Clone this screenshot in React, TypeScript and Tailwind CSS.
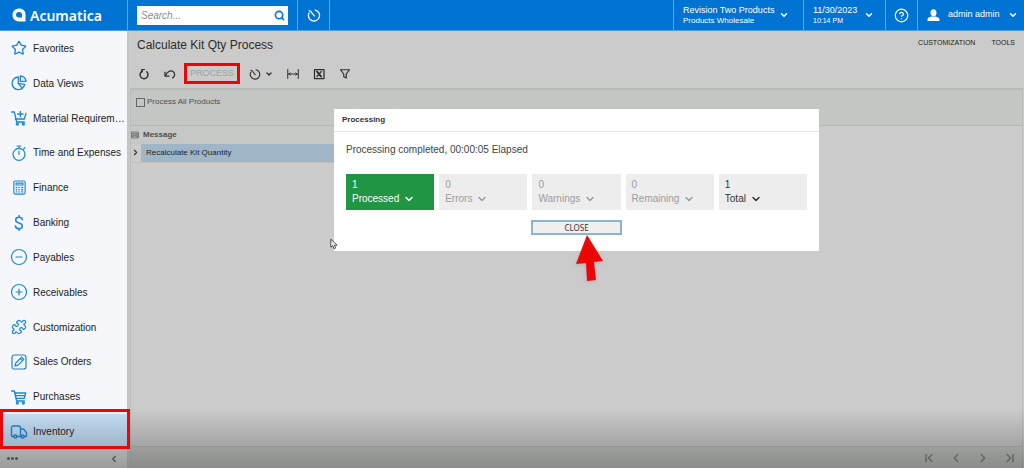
import React, { useState } from 'react';
import {
  ChevronDown,
  ChevronFirst,
  ChevronLast,
  ChevronLeft,
  ChevronRight,
  CircleMinus,
  CirclePlus,
  CircleHelp,
  Puzzle,
  Search,
  Star,
  Truck,
} from 'lucide-react';

type IconProps = { className?: string };

const stroke = {
  viewBox: '0 0 24 24',
  fill: 'none',
  stroke: 'currentColor',
  strokeLinecap: 'round' as const,
  strokeLinejoin: 'round' as const,
};

function PieIcon({ className }: IconProps) {
  return (
    <svg {...stroke} strokeWidth="2" className={className}>
      <path d="M11 3a9.500 9.500 0 1 0 9.500 11L11 12.500z" />
      <path d="M14 9.500V1.500a8.500 8.500 0 0 1 8.500 8z" />
      <path d="m11 12.500 6 7.500" />
    </svg>
  );
}

function CartIcon({ className, plus }: IconProps & { plus?: boolean }) {
  return (
    <svg {...stroke} strokeWidth="2" className={className}>
      <path d="M1 3h4l3.500 15H20" />
      {plus ? <path d="M6.500 13.500H20L22.500 5M14 2v8M10 6h8" /> : <path d="M5.500 6H22l-2 8H7.500M6.500 10H21" />}
      <circle cx="9.500" cy="21" r="1.500" />
      <circle cx="18.500" cy="21" r="1.500" />
    </svg>
  );
}

function StopwatchIcon({ className }: IconProps) {
  return (
    <svg {...stroke} strokeWidth="1.800" className={className}>
      <circle cx="12" cy="14" r="9" />
      <path d="M12 5V2M9 1.500h6M12 9v5M19 6l2-2" />
    </svg>
  );
}

function CalculatorIcon({ className }: IconProps) {
  return (
    <svg {...stroke} strokeWidth="1.800" className={className}>
      <rect x="3" y="1.500" width="18" height="21" rx="2" />
      <path d="M6.500 5h11v3h-11z" />
      <path d="M7 12h.5M11 12h.5M15.500 12h1.500M7 15.500h.5M11 15.500h.5M15.500 15.500h1.500M7 19h.5M11 19h.5M15.500 19h1.500" strokeWidth="2.200" />
    </svg>
  );
}

function DollarIcon({ className }: IconProps) {
  return (
    <svg {...stroke} strokeWidth="2.200" className={className}>
      <path d="M17 7c-.5-2.500-2.500-3.500-5-3.500S7 5 7 7.500s2 3.500 5 4.500 5 2 5 4.500-2 4-5 4-5-1.500-5.500-4M12 .800v2.700M12 20.500v2.700" />
    </svg>
  );
}

function PencilIcon({ className }: IconProps) {
  return (
    <svg {...stroke} strokeWidth="1.800" className={className}>
      <rect x="1.500" y="1.500" width="21" height="21" rx="3.500" />
      <path d="m6 18 1.200-4.500L16 4.700l3.300 3.300-8.800 8.800zM14 6.700l3.300 3.300" />
    </svg>
  );
}

function ClockIcon({ className }: IconProps) {
  return (
    <svg {...stroke} strokeWidth="2.200" className={className}>
      <path d="M14 3.500a9.500 9.500 0 1 1-10.500 5M12.500 13.500 7 6.500M4 4.500l3 2" />
    </svg>
  );
}

function RefreshIcon({ className }: IconProps) {
  return (
    <svg {...stroke} strokeWidth="2.800" className={className}>
      <path d="M17.500 7.500a8 8 0 1 1-8.500-1.500" />
      <path d="M8 2v5.500h5.500" strokeWidth="2.400" transform="rotate(90 10 5)" />
    </svg>
  );
}

function UndoIcon({ className }: IconProps) {
  return (
    <svg {...stroke} strokeWidth="2.500" className={className}>
      <path d="M3 15C6 7 13 4 18 7c5 3.500 4 10-1 13" />
      <path d="M2 8v8h8" />
    </svg>
  );
}

function FitIcon({ className }: IconProps) {
  return (
    <svg {...stroke} strokeWidth="2" className={className}>
      <path d="M1.500 3v18M22.500 3v18M3 12h18M6.500 10 4 12l2.500 2M17.500 10l2.500 2-2.500 2" />
    </svg>
  );
}

function ExcelIcon({ className }: IconProps) {
  return (
    <svg {...stroke} strokeWidth="2.500" className={className}>
      <rect x="3" y="3" width="19" height="18" />
      <path d="m8 7 8 10" strokeWidth="4" />
      <path d="m16.500 7-8.500 10" />
    </svg>
  );
}

function FilterIcon({ className }: IconProps) {
  return (
    <svg {...stroke} strokeWidth="2.400" className={className}>
      <path d="M3 3.500h18L14.500 12v8l-5-2.500V12z" />
    </svg>
  );
}

function GridIcon({ className }: IconProps) {
  return (
    <svg {...stroke} strokeWidth="2.500" className={className}>
      <path d="M2 3h20v18H2zM2 8h20M8 12v5l3-2.500zM16 12v5l-3-2.500zM2 12h4M18 12h4M2 17h4M18 17h4" />
    </svg>
  );
}

const modules = [
  { name: 'Favorites', icon: <Star className="size-4" strokeWidth={2} /> },
  { name: 'Data Views', icon: <PieIcon className="size-4" /> },
  { name: 'Material Requirem…', icon: <CartIcon className="size-4" plus /> },
  { name: 'Time and Expenses', icon: <StopwatchIcon className="size-4" /> },
  { name: 'Finance', icon: <CalculatorIcon className="size-[15px]" /> },
  { name: 'Banking', icon: <DollarIcon className="size-4" /> },
  { name: 'Payables', icon: <CircleMinus className="size-[18px]" strokeWidth={1.6} /> },
  { name: 'Receivables', icon: <CirclePlus className="size-[18px]" strokeWidth={1.6} /> },
  { name: 'Customization', icon: <Puzzle className="size-4" strokeWidth={1.8} /> },
  { name: 'Sales Orders', icon: <PencilIcon className="size-4" /> },
  { name: 'Purchases', icon: <CartIcon className="size-4" /> },
  { name: 'Inventory', icon: <Truck className="size-[18px]" strokeWidth={1.8} />, active: true },
];

const counters = [
  { count: 1, label: 'Processed', style: 'bg-[#209544] text-white' },
  { count: 0, label: 'Errors', style: 'bg-[#ededed] text-[#9c9c9c]' },
  { count: 0, label: 'Warnings', style: 'bg-[#ededed] text-[#9c9c9c]' },
  { count: 0, label: 'Remaining', style: 'bg-[#ededed] text-[#9c9c9c]' },
  { count: 1, label: 'Total', style: 'bg-[#ededed] text-[#333]' },
];

function Header() {
  return (
    <header className="flex h-[31px] shrink-0 border-b border-[#4a9fe0] bg-[#0073d3] text-[9px] text-white">
      <div className="flex w-32 shrink-0 items-center gap-1 border-r border-[#5aa8e6] pl-3">
        <svg viewBox="0 0 28 28" className="size-[14px]">
          <path
            fill="currentColor"
            fillRule="evenodd"
            d="M14 1c8 0 13 5 13 12v14H14C6 27 1 21 1 14S6 1 14 1zm0 7c-4 0-6 2.500-6 5.500s2 5.500 6 5.500h6v-5.500C20 10.500 18 8 14 8z"
          />
        </svg>
        <span className="font-['Noto_Sans'] text-[14px] font-semibold">Acumatica</span>
      </div>
      <div className="flex w-[170px] shrink-0 items-center border-r border-[#5aa8e6] px-[9px]">
        <div className="flex h-[19px] w-full items-center bg-white pr-[3px] pl-1">
          <input
            type="text"
            aria-label="Search"
            placeholder="Search..."
            className="min-w-0 flex-1 text-[10px] text-[#333] italic outline-none placeholder:text-[#8c8c8c]"
          />
          <Search className="size-[11px] text-[#0073d3]" strokeWidth={3.5} />
        </div>
      </div>
      <button aria-label="Recent" className="flex w-8 shrink-0 items-center justify-center border-r border-[#5aa8e6]">
        <ClockIcon className="size-[14px]" />
      </button>
      <div className="flex-1" />
      <button className="flex w-[131px] items-center gap-[5px] border-x border-[#5aa8e6] pl-[9px] text-left whitespace-nowrap">
        <span>
          <span className="block leading-[11px]">Revision Two Products</span>
          <span className="block text-[8px] leading-[10px]">Products Wholesale</span>
        </span>
        <ChevronDown className="size-[10px]" strokeWidth={3.5} />
      </button>
      <button className="flex w-[82px] items-center gap-[7px] border-r border-[#5aa8e6] pl-[9px] text-left whitespace-nowrap">
        <span>
          <span className="block leading-[11px]">11/30/2023</span>
          <span className="block text-[7px] leading-[10px]">10:14 PM</span>
        </span>
        <ChevronDown className="size-[10px]" strokeWidth={3.5} />
      </button>
      <button aria-label="Help" className="flex w-8 items-center justify-center border-r border-[#5aa8e6]">
        <CircleHelp className="size-[15px]" strokeWidth={2} />
      </button>
      <button className="flex w-[106px] items-center gap-2 pl-[9px] whitespace-nowrap">
        <svg viewBox="0 0 24 24" fill="currentColor" className="size-[13px]">
          <ellipse cx="12" cy="7" rx="5.500" ry="6.500" />
          <path d="M1 22v-3c0-3 4-4 7-5h8c3 1 7 2 7 5v3z" />
        </svg>
        admin admin
        <ChevronDown className="size-[10px]" strokeWidth={3.5} />
      </button>
    </header>
  );
}

function Sidebar() {
  return (
    <aside className="flex w-[129px] shrink-0 flex-col border-r-2 border-[#c2c4c6] bg-[#f5f7fa]">
      <nav className="flex flex-1 flex-col">
        {modules.map((m) => (
          <a
            key={m.name}
            href="#"
            className={`relative flex flex-1 items-center gap-1 pl-[9px] text-[10px] whitespace-nowrap text-[#222] ${
              m.active ? 'bg-[#c5e0f7]' : ''
            }`}
          >
            <span className="flex w-5 justify-center text-[#1c86d8]">{m.icon}</span>
            {m.name}
            {m.active && <span className="absolute -top-[5px] -right-[3px] bottom-0 left-0 z-30 border-[3px] border-[#e80808]" />}
          </a>
        ))}
      </nav>
      <div className="flex h-[19px] items-center justify-between bg-[#dcdedf] pr-2 pl-[7px] text-[#666]">
        <button aria-label="More" className="flex gap-px">
          <span className="size-[3px] rounded-full bg-current" />
          <span className="size-[3px] rounded-full bg-current" />
          <span className="size-[3px] rounded-full bg-current" />
        </button>
        <button aria-label="Collapse">
          <ChevronLeft className="size-[10px]" strokeWidth={3} />
        </button>
      </div>
    </aside>
  );
}

function Toolbar() {
  return (
    <div className="flex h-[21px] items-center pl-2 text-[#2e2e2e]">
      <button aria-label="Refresh">
        <RefreshIcon className="size-3" />
      </button>
      <button aria-label="Undo" className="ml-[14px]">
        <UndoIcon className="size-3" />
      </button>
      <button disabled className="ml-2 h-[21px] w-[56px] border-[3px] border-[#e80808] text-[9px] text-[#a0a0a0]">
        PROCESS
      </button>
      <button aria-label="Schedule" className="ml-[9px] flex items-center gap-1">
        <ClockIcon className="size-3" />
        <ChevronDown className="size-2" strokeWidth={4} />
      </button>
      <button aria-label="Fit columns" className="ml-[14px]">
        <FitIcon className="size-3" />
      </button>
      <button aria-label="Export" className="ml-[14px]">
        <ExcelIcon className="size-3" />
      </button>
      <button aria-label="Filter" className="ml-[14px]">
        <FilterIcon className="size-3" />
      </button>
    </div>
  );
}

function ProcessingDialog({ onClose }: { onClose: () => void }) {
  return (
    <div className="absolute inset-x-0 top-[78px] flex justify-center">
      <div role="dialog" aria-label="Processing" className="relative w-[485px] bg-white pb-4 text-[10px] text-[#444]">
        <h2 className="flex h-[23px] items-center border-b border-[#e6e6e6] pl-2 text-[8px] font-bold text-[#333]">
          Processing
        </h2>
        <p className="mt-[10px] px-3 leading-4">Processing completed, 00:00:05 Elapsed</p>
        <div className="mt-4 grid grid-cols-5 gap-[5px] px-3">
          {counters.map((c) => (
            <button key={c.label} className={`flex h-9 flex-col justify-center pl-[6px] text-left ${c.style}`}>
              <span className="leading-[14px]">{c.count}</span>
              <span className="flex items-center gap-1 leading-[14px]">
                {c.label}
                <ChevronDown className="size-3" strokeWidth={3} />
              </span>
            </button>
          ))}
        </div>
        <button
          onClick={onClose}
          className="mx-auto mt-[10px] block h-[15px] w-[91px] border-2 border-[#8fb4cf] bg-[#efefef] font-['Noto_Sans'] text-[8px] leading-[11px] text-[#333]"
        >
          CLOSE
        </button>
        <svg viewBox="0 0 30 50" className="absolute top-[125px] left-[240px] h-[50px] w-[30px] drop-shadow-sm">
          <path fill="#ec0606" d="M13 1 29 27l-9 1 2 18-9 1-1-18-10 1z" />
        </svg>
        <svg viewBox="0 0 10 14" className="absolute top-[129px] -left-1 h-3 w-2">
          <path fill="#eee" stroke="#333" d="M1 1v10l2.500-2 1.500 4 2-1-1.500-3.500H9z" />
        </svg>
      </div>
    </div>
  );
}

export default function App() {
  const [open, setOpen] = useState(true);

  return (
    <div className="relative flex h-screen flex-col overflow-hidden bg-[#cbcbcb] font-['Liberation_Sans',sans-serif]">
      <Header />
      <div className="flex min-h-0 flex-1">
        <Sidebar />
        <main className="relative flex min-w-0 flex-1 flex-col pl-px">
          <div className="flex h-8 justify-between pr-[9px] pl-[7px]">
            <h1 className="pt-[6px] text-[12px] leading-4 text-[#2b2b2b]">Calculate Kit Qty Process</h1>
            <div className="flex gap-4 pt-[7px] text-[7px] leading-[10px] text-[#222]">
              <button className="h-[10px]">CUSTOMIZATION</button>
              <button className="h-[10px]">TOOLS</button>
            </div>
          </div>
          <Toolbar />
          <section className="mt-1 mr-px flex flex-1 flex-col border-x border-t-2 border-[#b9bbb9]">
            <div className="h-9 border-b border-[#b5b7b5] bg-[#c4c6c4] pt-[6px] pl-[5px]">
              <label className="flex h-3 items-center gap-[2px] text-[8px] text-[#4d4d4d]">
                <input type="checkbox" className="size-[9px] appearance-none border border-[#666]" />
                Process All Products
              </label>
            </div>
            <table className="w-1/2 table-fixed text-left text-[8px]">
              <thead className="bg-[#c6c8c6]">
                <tr className="h-[18px]">
                  <th className="w-[10px]">
                    <GridIcon className="size-2 text-[#666]" />
                  </th>
                  <th className="pl-[2px] font-bold text-[#4d4d4d]">Message</th>
                </tr>
              </thead>
              <tbody>
                <tr className="h-[18px] border-b border-[#bebebe]">
                  <td>
                    <ChevronRight className="size-[9px] text-[#333]" strokeWidth={3} />
                  </td>
                  <td className="bg-[#9fb6c8] pl-[5px] text-[#222]">Recalculate Kit Quantity</td>
                </tr>
              </tbody>
            </table>
            <div className="flex-1" />
            <div className="flex h-[22px] items-center justify-end gap-[13px] border-t border-[#b9bbb9] bg-[#c4c6c4] pr-[5px] text-[#858585]">
              <button aria-label="First page">
                <ChevronFirst className="size-[14px]" strokeWidth={2.5} />
              </button>
              <button aria-label="Previous page">
                <ChevronLeft className="size-[14px]" strokeWidth={2.5} />
              </button>
              <button aria-label="Next page">
                <ChevronRight className="size-[14px]" strokeWidth={2.5} />
              </button>
              <button aria-label="Last page">
                <ChevronLast className="size-[14px]" strokeWidth={2.5} />
              </button>
            </div>
          </section>
          {open && <ProcessingDialog onClose={() => setOpen(false)} />}
        </main>
      </div>
      <div className="pointer-events-none absolute inset-x-0 bottom-0 z-20 h-[60px] bg-linear-to-b from-black/0 to-black/30" />
    </div>
  );
}
